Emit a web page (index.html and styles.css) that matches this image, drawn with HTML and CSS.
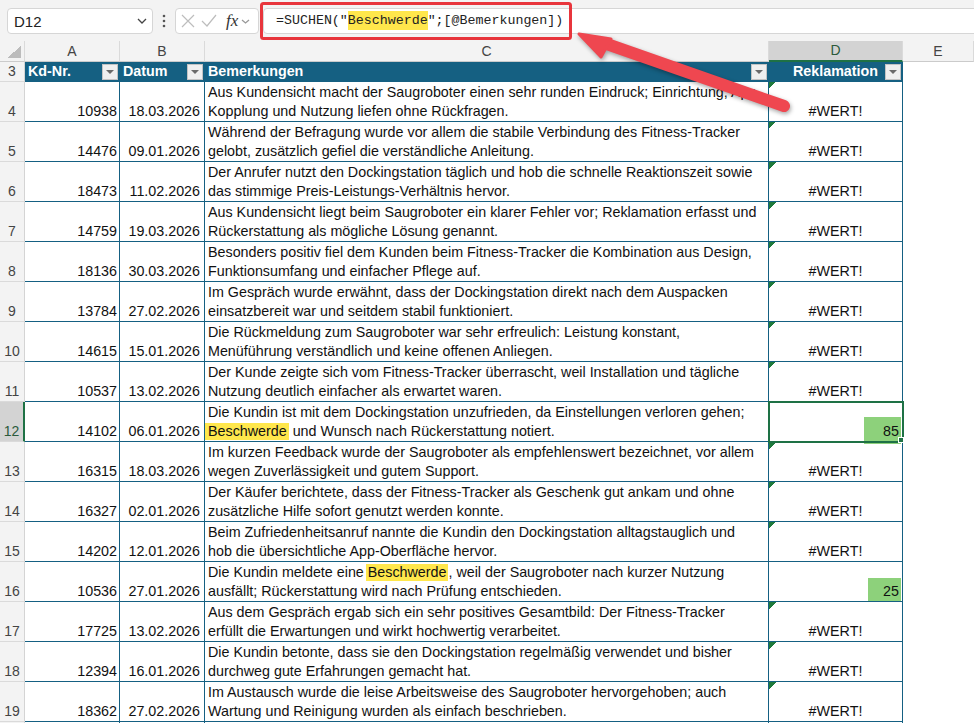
FILE: index.html
```html
<!DOCTYPE html>
<html lang="de">
<head>
    <meta charset="UTF-8">
    <meta name="viewport" content="width=device-width, initial-scale=1.0">
    <title>Reklamationen</title>
    <link rel="stylesheet" href="styles.css">
</head>
<body>
<div class="page">
    <!-- Namenfeld + Bearbeitungsleiste -->
    <div class="topbar">
        <div class="namebox">
            <span>D12</span>
            <svg class="chev" width="10" height="6" viewBox="0 0 10 6"><polyline points="1,1 5,5 9,1"/></svg>
        </div>
        <div class="dots">
            <svg width="4" height="14" viewBox="0 0 4 14"><circle cx="2" cy="2" r="1.3"/><circle cx="2" cy="7" r="1.3"/><circle cx="2" cy="12" r="1.3"/></svg>
        </div>
        <div class="fxbox">
            <svg class="tool" width="14" height="14" viewBox="0 0 14 14"><path d="M1 1 L13 13 M13 1 L1 13"/></svg>
            <svg class="tool ok" width="16" height="14" viewBox="0 0 16 14"><polyline points="1,7 6,12 15,1"/></svg>
            <span class="fx">fx</span>
            <svg class="chev small" width="9" height="5" viewBox="0 0 9 5"><polyline points="1,1 4.5,4 8,1"/></svg>
        </div>
        <div class="formula">=SUCHEN("<span class="mark">Beschwerde</span>";[@Bemerkungen])</div>
    </div>

    <table class="sheet">
        <colgroup>
            <col class="c-rh"><col class="c-a"><col class="c-b"><col class="c-c"><col class="c-d"><col class="c-e">
        </colgroup>
        <tr class="colhead">
            <td class="corner"></td><td>A</td><td>B</td><td>C</td><td class="sel">D</td><td>E</td>
        </tr>
        <tr class="head">
            <td class="rh">3</td>
            <td class="th"><div class="hd"><span>Kd-Nr.</span><span class="dd"></span></div></td>
            <td class="th"><div class="hd"><span>Datum</span><span class="dd"></span></div></td>
            <td class="th"><div class="hd"><span>Bemerkungen</span><span class="dd"></span></div></td>
            <td class="th"><div class="hd right"><span>Reklamation</span><span class="dd"></span></div></td>
            <td class="e"></td>
        </tr>
        <tr>
            <td class="rh">4</td><td class="num">10938</td><td class="date">18.03.2026</td>
            <td class="txt">Aus Kundensicht macht der Saugroboter einen sehr runden Eindruck; Einrichtung, App-<br>Kopplung und Nutzung liefen ohne Rückfragen.</td>
            <td class="res err">#WERT!</td><td class="e"></td>
        </tr>
        <tr>
            <td class="rh">5</td><td class="num">14476</td><td class="date">09.01.2026</td>
            <td class="txt">Während der Befragung wurde vor allem die stabile Verbindung des Fitness-Tracker<br>gelobt, zusätzlich gefiel die verständliche Anleitung.</td>
            <td class="res err">#WERT!</td><td class="e"></td>
        </tr>
        <tr>
            <td class="rh">6</td><td class="num">18473</td><td class="date">11.02.2026</td>
            <td class="txt">Der Anrufer nutzt den Dockingstation täglich und hob die schnelle Reaktionszeit sowie<br>das stimmige Preis-Leistungs-Verhältnis hervor.</td>
            <td class="res err">#WERT!</td><td class="e"></td>
        </tr>
        <tr>
            <td class="rh">7</td><td class="num">14759</td><td class="date">19.03.2026</td>
            <td class="txt">Aus Kundensicht liegt beim Saugroboter ein klarer Fehler vor; Reklamation erfasst und<br>Rückerstattung als mögliche Lösung genannt.</td>
            <td class="res err">#WERT!</td><td class="e"></td>
        </tr>
        <tr>
            <td class="rh">8</td><td class="num">18136</td><td class="date">30.03.2026</td>
            <td class="txt">Besonders positiv fiel dem Kunden beim Fitness-Tracker die Kombination aus Design,<br>Funktionsumfang und einfacher Pflege auf.</td>
            <td class="res err">#WERT!</td><td class="e"></td>
        </tr>
        <tr>
            <td class="rh">9</td><td class="num">13784</td><td class="date">27.02.2026</td>
            <td class="txt">Im Gespräch wurde erwähnt, dass der Dockingstation direkt nach dem Auspacken<br>einsatzbereit war und seitdem stabil funktioniert.</td>
            <td class="res err">#WERT!</td><td class="e"></td>
        </tr>
        <tr>
            <td class="rh">10</td><td class="num">14615</td><td class="date">15.01.2026</td>
            <td class="txt">Die Rückmeldung zum Saugroboter war sehr erfreulich: Leistung konstant,<br>Menüführung verständlich und keine offenen Anliegen.</td>
            <td class="res err">#WERT!</td><td class="e"></td>
        </tr>
        <tr>
            <td class="rh">11</td><td class="num">10537</td><td class="date">13.02.2026</td>
            <td class="txt">Der Kunde zeigte sich vom Fitness-Tracker überrascht, weil Installation und tägliche<br>Nutzung deutlich einfacher als erwartet waren.</td>
            <td class="res err">#WERT!</td><td class="e"></td>
        </tr>
        <tr>
            <td class="rh sel">12</td><td class="num">14102</td><td class="date">06.01.2026</td>
            <td class="txt">Die Kundin ist mit dem Dockingstation unzufrieden, da Einstellungen verloren gehen;<br><span class="mark first">Beschwerde</span> und Wunsch nach Rückerstattung notiert.</td>
            <td class="res val cur"><span class="hit big">85</span></td><td class="e"></td>
        </tr>
        <tr>
            <td class="rh">13</td><td class="num">16315</td><td class="date">18.03.2026</td>
            <td class="txt">Im kurzen Feedback wurde der Saugroboter als empfehlenswert bezeichnet, vor allem<br>wegen Zuverlässigkeit und gutem Support.</td>
            <td class="res err">#WERT!</td><td class="e"></td>
        </tr>
        <tr>
            <td class="rh">14</td><td class="num">16327</td><td class="date">02.01.2026</td>
            <td class="txt">Der Käufer berichtete, dass der Fitness-Tracker als Geschenk gut ankam und ohne<br>zusätzliche Hilfe sofort genutzt werden konnte.</td>
            <td class="res err">#WERT!</td><td class="e"></td>
        </tr>
        <tr>
            <td class="rh">15</td><td class="num">14202</td><td class="date">12.01.2026</td>
            <td class="txt">Beim Zufriedenheitsanruf nannte die Kundin den Dockingstation alltagstauglich und<br>hob die übersichtliche App-Oberfläche hervor.</td>
            <td class="res err">#WERT!</td><td class="e"></td>
        </tr>
        <tr>
            <td class="rh">16</td><td class="num">10536</td><td class="date">27.01.2026</td>
            <td class="txt">Die Kundin meldete eine <span class="mark">Beschwerde</span>, weil der Saugroboter nach kurzer Nutzung<br>ausfällt; Rückerstattung wird nach Prüfung entschieden.</td>
            <td class="res val"><span class="hit">25</span></td><td class="e"></td>
        </tr>
        <tr>
            <td class="rh">17</td><td class="num">17725</td><td class="date">13.02.2026</td>
            <td class="txt">Aus dem Gespräch ergab sich ein sehr positives Gesamtbild: Der Fitness-Tracker<br>erfüllt die Erwartungen und wirkt hochwertig verarbeitet.</td>
            <td class="res err">#WERT!</td><td class="e"></td>
        </tr>
        <tr>
            <td class="rh">18</td><td class="num">12394</td><td class="date">16.01.2026</td>
            <td class="txt">Die Kundin betonte, dass sie den Dockingstation regelmäßig verwendet und bisher<br>durchweg gute Erfahrungen gemacht hat.</td>
            <td class="res err">#WERT!</td><td class="e"></td>
        </tr>
        <tr>
            <td class="rh">19</td><td class="num">18362</td><td class="date">27.02.2026</td>
            <td class="txt">Im Austausch wurde die leise Arbeitsweise des Saugroboter hervorgehoben; auch<br>Wartung und Reinigung wurden als einfach beschrieben.</td>
            <td class="res err">#WERT!</td><td class="e"></td>
        </tr>
        <tr>
            <td class="rh"></td><td class="num"></td><td class="date"></td><td class="txt"></td><td class="res"></td><td class="e"></td>
        </tr>
    </table>

    <!-- Markierung und Pfeil -->
    <svg class="annot" width="974" height="723" viewBox="0 0 974 723">
        <rect class="frame" x="261.5" y="3.5" width="309" height="35" rx="2"/>
        <g class="arrow">
            <line x1="604" y1="43" x2="784" y2="106"/>
            <polygon points="579,34 601,57 611,39"/>
        </g>
    </svg>
</div>
</body>
</html>
```

FILE: styles.css
```css
body {
    margin: 0;
    font-family: "Liberation Sans", Arial, sans-serif;
    background-color: #fff;
    overflow: hidden;
}
.page {
    position: relative;
    width: 974px;
    height: 723px;
    overflow: hidden;
}

/* Bearbeitungsleiste */
.topbar {
    display: flex;
    align-items: flex-start;
    height: 41px;
    box-sizing: border-box;
    padding: 8px 0 0 7px;
    background-color: #f3f3f3;
}
.namebox {
    width: 146px;
    height: 26px;
    box-sizing: border-box;
    display: flex;
    align-items: center;
    justify-content: space-between;
    padding: 0 5px 0 6px;
    background-color: #fff;
    border: 1px solid #d6d6d6;
    border-radius: 4px;
    font-size: 15px;
    color: #222;
}
.chev polyline {
    fill: none;
    stroke: #444;
    stroke-width: 1.3;
}
.chev.small polyline {
    stroke: #999;
}
.dots {
    width: 22px;
    height: 26px;
    display: flex;
    align-items: center;
    justify-content: center;
}
.dots circle {
    fill: #555;
}
.fxbox {
    width: 84px;
    height: 26px;
    box-sizing: border-box;
    display: flex;
    align-items: center;
    gap: 6px;
    padding-left: 5px;
    background-color: #fff;
    border: 1px solid #d6d6d6;
    border-radius: 4px;
}
.tool path,
.tool polyline {
    fill: none;
    stroke: #bdbdbd;
    stroke-width: 1.2;
}
.fx {
    font-family: "Liberation Serif", serif;
    font-style: italic;
    font-size: 17px;
    color: #333;
    margin-left: 3px;
    margin-right: -3px;
}
.formula {
    flex: 1;
    height: 26px;
    box-sizing: border-box;
    margin-left: 4px;
    margin-right: -6px;
    padding-left: 12px;
    background-color: #fff;
    border: 1px solid #d6d6d6;
    border-radius: 4px 0 0 4px;
    font-family: "Liberation Mono", monospace;
    font-size: 13.3px;
    line-height: 24px;
    color: #222;
}
.mark {
    background-color: #ffe74c;
}
.formula .mark {
    box-shadow: 0 -2px 0 #ffe74c, 0 2px 0 #ffe74c;
}

/* Tabelle */
.sheet {
    border-collapse: separate;
    border-spacing: 0;
    table-layout: fixed;
    width: 974px;
    font-size: 14.3px;
    color: #111;
}
.sheet td {
    padding: 0;
    box-sizing: border-box;
    white-space: nowrap;
    line-height: 19px;
}
.c-rh { width: 25px; }
.c-a { width: 95px; }
.c-b { width: 85px; }
.c-c { width: 564px; }
.c-d { width: 134px; }
.c-e { width: 71px; }

.colhead td {
    background-color: #f3f3f3;
    border-right: 1px solid #dadada;
    border-bottom: 1px solid #cbcbcb;
    text-align: center;
    vertical-align: middle;
    font-size: 14px;
    color: #444;
}
.colhead td.sel {
    background-color: #d3d3d3;
    border-bottom: 2px solid #1e7145;
    color: #2b5a3b;
}
.colhead td.corner {
    background: #f3f3f3 linear-gradient(to top left, #bcbcbc 50%, transparent 50%) no-repeat right 3px bottom 3px / 14px 12px;
}

.sheet tr {
    height: 40px;
}
.sheet tr.colhead,
.sheet tr.head {
    height: 20px;
}
.rh {
    background-color: #f3f3f3;
    border-right: 1px solid #d4d4d4;
    border-bottom: 1px solid #dadada;
    text-align: center;
    vertical-align: bottom;
    font-size: 14px;
    color: #444;
}
.head .rh {
    vertical-align: middle;
}
.rh.sel {
    background-color: #d3d3d3;
    border-right: 2px solid #1e7145;
    color: #2b5a3b;
}

.th {
    background-color: #156082;
    border-right: 1px solid #156082;
    border-bottom: 1px solid #156082;
    color: #fff;
    font-weight: bold;
}
.hd {
    display: flex;
    align-items: center;
    justify-content: space-between;
    padding: 0 1px 0 3px;
}
.hd.right {
    justify-content: flex-end;
    gap: 7px;
}
.dd {
    width: 16px;
    height: 16px;
    box-sizing: border-box;
    display: flex;
    align-items: center;
    justify-content: center;
    background-color: #efefef;
    border: 1px solid #c3c3c3;
}
.dd::after {
    content: "";
    border-left: 4px solid transparent;
    border-right: 4px solid transparent;
    border-top: 4px solid #6a6a6a;
}

.num,
.date,
.txt,
.res {
    border-right: 1px solid #156082;
    border-bottom: 1px solid #156082;
    vertical-align: bottom;
}
.num {
    text-align: right;
    padding-right: 2px !important;
}
.date {
    text-align: right;
    padding-right: 4px !important;
}
.txt {
    padding-left: 3px !important;
}
.txt .mark {
    padding: 0 2px 0 2px;
    margin-left: -2px;
    box-shadow: 0 1px 0 #ffe74c;
}
.txt .mark.first {
    padding-left: 3px;
    margin-left: -3px;
}
.res {
    text-align: center;
}
.res.err {
    background: linear-gradient(135deg, #1f7a3c 50%, transparent 50%) no-repeat 0 0 / 7px 7px;
}
.res.val {
    text-align: right;
    padding-right: 1px !important;
}
.res.cur {
    position: relative;
    outline: 2px solid #1e7145;
    outline-offset: -1px;
}
.res.cur::after {
    content: "";
    position: absolute;
    right: -2px;
    bottom: -2px;
    width: 4px;
    height: 4px;
    background-color: #1e7145;
    border: 1px solid #fff;
}
.hit {
    background-color: #8dd17b;
    padding: 0 2px 0 15px;
    box-shadow: 0 -5px 0 #8dd17b, 0 2px 0 #8dd17b;
}
.hit.big {
    padding-left: 19px;
    box-shadow: 0 -6px 0 #8dd17b, 0 5px 0 #8dd17b;
}
.e {
    background-color: #fff;
}

/* Anmerkungen */
.annot {
    position: absolute;
    top: 0;
    left: 0;
    pointer-events: none;
}
.frame {
    fill: none;
    stroke: #e8353c;
    stroke-width: 3;
}
.arrow {
    filter: drop-shadow(1px 2px 2px rgba(0, 0, 0, 0.35));
}
.arrow line {
    stroke: #ef4750;
    stroke-width: 12;
    stroke-linecap: round;
}
.arrow polygon {
    fill: #ef4750;
    stroke: #ef4750;
    stroke-width: 3;
    stroke-linejoin: round;
}
```
